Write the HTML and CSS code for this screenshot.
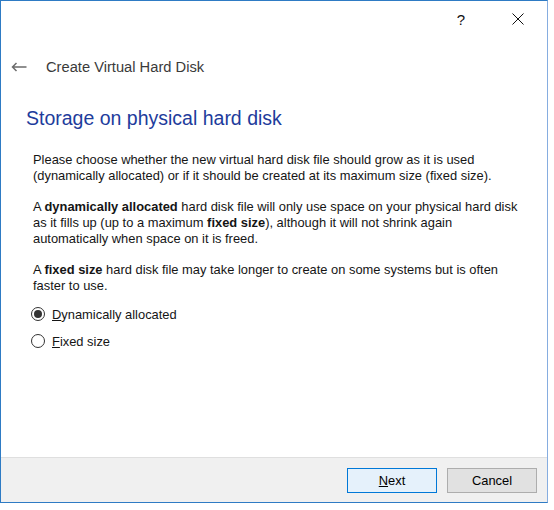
FILE: index.html
```html
<!DOCTYPE html>
<html lang="en">
<head>
<meta charset="utf-8">
<title>Create Virtual Hard Disk</title>
<link rel="stylesheet" href="styles.css">
</head>
<body>
<div class="window">
  <div class="titlebar">
    <span class="cap-btn help">?</span>
    <span class="cap-btn close">
      <svg width="12" height="12" viewBox="0 0 12 12"><path d="M0.5 0.5 L11.5 11.5 M11.5 0.5 L0.5 11.5" stroke="#111" stroke-width="1" fill="none"/></svg>
    </span>
  </div>
  <div class="nav">
    <svg class="back" width="16" height="10" viewBox="0 0 16 10"><path d="M1.5 5 H15.5 M5.5 1 L1.5 5 L5.5 9" stroke="#6b6b6b" stroke-width="1.5" fill="none"/></svg>
    <span class="nav-title">Create Virtual Hard Disk</span>
  </div>
  <main class="content">
    <h1 class="heading">Storage on physical hard disk</h1>
    <p class="para">Please choose whether the new virtual hard disk file should grow as it is used<br>(dynamically allocated) or if it should be created at its maximum size (fixed size).</p>
    <p class="para">A <b>dynamically allocated</b> hard disk file will only use space on your physical hard disk<br>as it fills up (up to a maximum <b>fixed size</b>), although it will not shrink again<br>automatically when space on it is freed.</p>
    <p class="para">A <b>fixed size</b> hard disk file may take longer to create on some systems but is often<br>faster to use.</p>
    <div class="options">
      <div class="radio"><span class="dot checked"></span><span class="label"><u>D</u>ynamically allocated</span></div>
      <div class="radio"><span class="dot"></span><span class="label"><u>F</u>ixed size</span></div>
    </div>
  </main>
  <footer class="footer">
    <button class="btn primary"><u>N</u>ext</button>
    <button class="btn">Cancel</button>
  </footer>
</div>
</body>
</html>
```

FILE: styles.css
```css
body {
  margin: 0;
  background: #ffffff;
  font-family: "Liberation Sans", Arial, sans-serif;
}

.window {
  width: 548px;
  height: 503px;
  box-sizing: border-box;
  border: 1px solid #2e7bc4;
  border-right-color: #86ade0;
  display: flex;
  flex-direction: column;
  background: #ffffff;
}

.titlebar {
  height: 36px;
  display: flex;
  justify-content: flex-end;
  align-items: center;
  padding-right: 6px;
  gap: 11px;
}

.cap-btn {
  width: 46px;
  height: 36px;
  display: flex;
  align-items: center;
  justify-content: center;
}

.help {
  font-size: 15px;
  color: #111;
}

.nav {
  margin-top: 16px;
  height: 28px;
  display: flex;
  align-items: center;
  padding-left: 10px;
  gap: 19px;
}

.nav-title {
  font-size: 14.7px;
  color: #3a3a3a;
}

.content {
  flex: 1;
  padding-left: 25px;
}

.heading {
  margin: 23px 0 0;
  font-size: 19.5px;
  line-height: 28px;
  font-weight: normal;
  color: #1e3c9c;
}

.para {
  margin: 20px 0 0 7px;
  font-size: 12.9px;
  line-height: 16px;
  color: #151515;
}

.para + .para {
  margin-top: 15px;
}

.options {
  margin: 7px 0 0 5px;
  display: flex;
  flex-direction: column;
  gap: 1px;
}

.radio {
  height: 26px;
  display: flex;
  align-items: center;
  gap: 7px;
  font-size: 12.9px;
  color: #151515;
}

.dot {
  width: 14px;
  height: 14px;
  box-sizing: border-box;
  border: 1px solid #333;
  border-radius: 50%;
  display: flex;
  align-items: center;
  justify-content: center;
}

.dot.checked::after {
  content: "";
  width: 8px;
  height: 8px;
  border-radius: 50%;
  background: #333;
}

.footer {
  height: 45px;
  box-sizing: border-box;
  border-top: 1px solid #dfdfdf;
  background: #f0f0f0;
  display: flex;
  justify-content: flex-end;
  align-items: flex-start;
  padding: 10px 10px 0 0;
  gap: 10px;
}

.btn {
  width: 90px;
  height: 25px;
  padding: 0;
  font-family: inherit;
  font-size: 12.9px;
  color: #000;
  background: #e1e1e1;
  border: 1px solid #adadad;
}

.btn.primary {
  background: #e5f1fb;
  border-color: #0078d7;
}
```
